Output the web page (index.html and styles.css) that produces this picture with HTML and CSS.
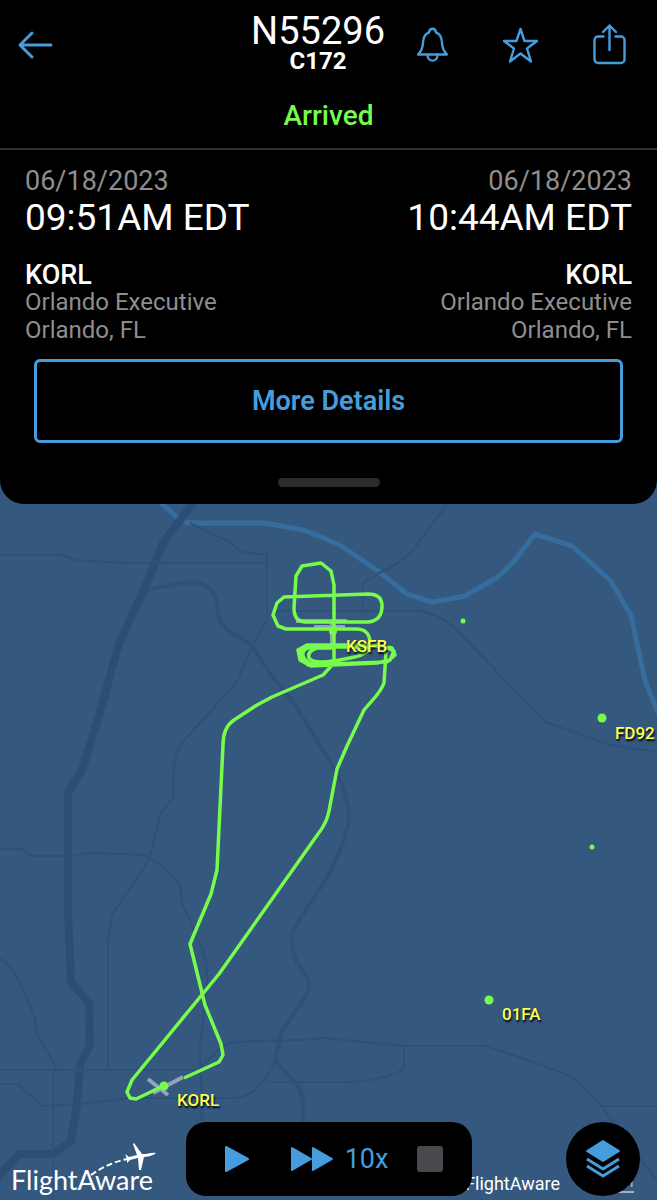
FILE: index.html
```html
<!DOCTYPE html>
<html lang="en">
<head>
    <meta charset="UTF-8">
    <meta name="viewport" content="width=device-width, initial-scale=1.0">
    <title>N55296 Flight Track</title>
    <link rel="stylesheet" href="styles.css">
</head>
<body>
    <div class="panel">
        <header class="header">
            <button class="icon-button" aria-label="Back">
                <svg class="icon" viewBox="0 0 36 42"><path d="M15 9 3 21l12 12M3 21h31" stroke-width="3"/></svg>
            </button>
            <div class="title">
                <h1>N55296</h1>
                <div class="aircraft">C172</div>
            </div>
            <div class="actions">
                <button class="icon-button" aria-label="Alerts">
                    <svg class="icon" viewBox="0 0 36 42"><path d="M3 30.500C6.500 27 7.800 24.500 8 19C8.300 12.500 10.500 9.500 14 8.500C14.500 3.500 20.500 3.500 21 8.500C24.500 9.500 26.700 12.500 27 19C27.200 24.500 28.500 27 32 30.500ZM12.500 31C12.500 38.500 22.500 38.500 22.500 31"/></svg>
                </button>
                <button class="icon-button" aria-label="Favorite">
                    <svg class="icon" viewBox="0 0 36 42"><path d="M17.500 5 21.500 17H34L24 24.500 28 37.500 17.500 29.500 7 37.500 11 24.500 1 17H13.500Z"/></svg>
                </button>
                <button class="icon-button" aria-label="Share">
                    <svg class="icon" viewBox="0 0 36 42"><path d="M12.500 12.500H7a3.500 3.500 0 0 0-3.500 3.500V35.500a3.500 3.500 0 0 0 3.500 3.500h23a3.500 3.500 0 0 0 3.500-3.500V16a3.500 3.500 0 0 0-3.500-3.500H24.500M18.500 26V1.500M12 8l6.500-6.500 6.500 6.500"/></svg>
                </button>
            </div>
        </header>

        <div class="status">Arrived</div>

        <div class="flight">
            <div class="endpoint">
                <div class="date">06/18/2023</div>
                <div class="time">09:51AM EDT</div>
                <h2>KORL</h2>
                <div class="place">Orlando Executive<br>Orlando, FL</div>
            </div>
            <div class="endpoint arrival">
                <div class="date">06/18/2023</div>
                <div class="time">10:44AM EDT</div>
                <h2>KORL</h2>
                <div class="place">Orlando Executive<br>Orlando, FL</div>
            </div>
        </div>

        <button class="details">More Details</button>
        <div class="handle"></div>
    </div>

    <main class="map">
        <svg class="map-canvas" viewBox="0 480 657 720" preserveAspectRatio="xMidYMin slice">
            <!-- river -->
            <path class="river" d="M160 502 180 520 190 523H265L304 530 340 545 378 571 407 594 432 602 465 596 498 577 515 560 535 534 572 546 610 580 631 615 645 681 660 717"/>

            <!-- roads -->
            <path class="road highway" d="M194 502 164 541 144 590 119 643 99 716 82 770 68 792V910L71 982 89 1003 90 1045 80 1064 77 1105 71 1141 53 1154H20L-3 1178"/>
            <path class="road major" d="M147 590C170 586 185 581 199 583C218 588 216 605 219 618C224 632 242 637 252 646L269 672 295 705 326 755C341 776 349 800 349 820C342 850 336 859 328 876L294 928C290 940 293 958 300 967C316 986 308 993 298 1008L281 1033 275 1061 298 1086C304 1094 303 1107 303 1125"/>
            <path class="road" d="M0 555H62L75 560 125 563H267M190 523 212 534 227 540 242 552 267 555V620L252 646 237 682 180 745 174 764 173 798 160 814 152 850 147 863 112 915 108 940V1070"/>
            <path class="road" d="M447 505 430 527 412 552 395 565 377 574 363 583V610M270 611H422C438 616 446 620 457 630L500 675 546 722 610 745 657 752"/>
            <path class="road" d="M-2 849H22L32 856H72L90 853 145 855 165 868 180 884 182 903 197 938C207 958 209 968 206 995L200 1045 202 1125"/>
            <path class="road" d="M-2 958C15 965 18 980 35 1017L37 1035 54 1063 56 1073M0 1070H197C210 1060 215 1052 225 1045C238 1039 270 1043 325 1038L404 1046H485L516 1056 568 1075C590 1090 604 1107 615 1126L657 1180M602 1106H657M404 1046V1065C404 1075 370 1082 344 1082H267M53 1073V1200M-2 1084H18L42 1106 79 1104 130 1098H235C260 1095 267 1075 275 1061"/>

            <!-- runways -->
            <path class="runway" d="M148 1079 168 1095M153 1093 183 1077M296 621H347M314 627H345M332 620V648"/>

            <!-- flight track -->
            <path class="track" d="M184 1078 219 1062 223 1055 221 1044 205 1005 190 944 211 894 217 870 223 745C223 732 228 724 234 720L257 705 272 697 323 675 334 663V585L331 571 321 563 302 566 296 576 294 608C294 618 299 622 306 622H368C379 621 382 614 382 606C382 597 376 594 368 594L284 597 277 603 273 615 278 626 286 629H356C367 629 370 635 370 644C370 655 358 657 334 661L308 665 301 656 302 649 311 646H382L394 651 390 660 377 663 311 666 300 660 298 650 307 645H377L392 648 395 655 387 662 330 664"/>
            <path class="track" d="M386 652 384 683C380 694 373 699 364 710L347 746 337 769 329 811C327 821 322 829 318 834L219 974 132 1080 127 1092 130 1098 136 1099 163 1086"/>
            <path class="track" d="M371 647H314Q301 648 303 656Q305 664 317 664H350"/>
            <path class="track" d="M334 648H317Q307 651 309 658Q313 664 334 661"/>

            <!-- airports -->
            <g class="airport">
                <circle cx="333" cy="631" r="4"/>
                <circle cx="164" cy="1086" r="4.500"/>
                <circle cx="602" cy="718" r="4.500"/>
                <circle cx="489" cy="1000" r="4.500"/>
                <circle cx="463" cy="621" r="2.500"/>
                <circle cx="592" cy="847" r="2.500"/>
            </g>
            <g class="airport-label">
                <text x="346" y="652">KSFB</text>
                <text x="615" y="739">FD92</text>
                <text x="502" y="1020">01FA</text>
                <text x="177" y="1106">KORL</text>
            </g>

            <!-- logo -->
            <text class="logo" x="11" y="1190">FlightAware</text>
            <path class="logo-trail" d="M91 1175Q108 1163 127 1159"/>
            <path class="logo-plane" d="M156 1153Q154 1152 146 1154L142 1154 134 1143 133 1144 137 1155 129 1157 125 1154 127 1159 127 1163 130 1160 138 1158 139 1170 141 1170 144 1157Q153 1156 156 1153Z"/>
        </svg>

        <a class="attribution" href="#">FlightAware</a>
        <a class="legal" href="#">mi</a>

        <div class="player">
            <button class="play" aria-label="Play">
                <svg width="26" height="28" viewBox="0 0 26 28"><path d="M2 2 24 14 2 26Z"/></svg>
            </button>
            <button class="speed">
                <svg width="44" height="28" viewBox="0 0 44 28"><path d="M2 3 21 14 2 25ZM23 3 42 14 23 25Z"/></svg>
                10x
            </button>
            <button class="stop" aria-label="Stop"></button>
        </div>
        <button class="layers" aria-label="Map layers">
            <svg width="36" height="40" viewBox="0 0 36 40"><path d="M18 2 34 12 18 22 2 12Z"/><path class="layer-line" d="M2 20 18 30 34 20M2 27 18 37 34 27"/></svg>
        </button>
    </main>
</body>
</html>
```
FILE: styles.css
```css
* {
    box-sizing: border-box;
}

body {
    display: flex;
    flex-direction: column;
    min-height: 100vh;
    margin: 0;
    font-family: Roboto, sans-serif;
    background-color: #34587e;
    color: #fff;
}

h1, h2 {
    margin: 0;
}

button {
    padding: 0;
    border: none;
    background: none;
    font-family: inherit;
    color: #459ddd;
    cursor: pointer;
}

svg {
    display: block;
}

.panel {
    position: relative;
    z-index: 1;
    padding-bottom: 17px;
    background-color: #000;
    border-radius: 0 0 24px 24px;
}

.header {
    display: flex;
    align-items: center;
    height: 90px;
    padding: 0 30px 0 17px;
}

.icon {
    width: 36px;
    height: 42px;
    fill: none;
    stroke: #459ddd;
    stroke-width: 2.4;
    stroke-linecap: round;
    stroke-linejoin: round;
}

.title {
    margin: 0 30px 4px auto;
    text-align: center;
}

.title h1 {
    font-size: 38px;
    font-weight: 400;
    line-height: 36px;
}

.aircraft {
    font-size: 24px;
    font-weight: 700;
    line-height: 24px;
}

.actions {
    display: flex;
    gap: 52px;
}

.status {
    height: 60px;
    border-bottom: 2px solid #303030;
    font-size: 28px;
    font-weight: 500;
    line-height: 52px;
    text-align: center;
    color: #77fb4c;
}

.flight {
    display: flex;
    justify-content: space-between;
    padding: 14px 25px 15px;
}

.arrival {
    text-align: right;
}

.date {
    font-size: 27px;
    line-height: 34px;
    color: #8e8e8e;
}

.time {
    font-size: 37px;
    line-height: 40px;
}

.flight h2 {
    margin-top: 24px;
    font-size: 27px;
    font-weight: 500;
    line-height: 26px;
}

.place {
    font-size: 24px;
    line-height: 28px;
    color: #8e8e8e;
}

.details {
    display: block;
    width: calc(100% - 68px);
    height: 84px;
    margin: 0 auto 35px;
    border: 3px solid #459ddd;
    border-radius: 6px;
    font-size: 27px;
    font-weight: 600;
}

.handle {
    width: 102px;
    height: 9px;
    margin: 0 auto;
    border-radius: 5px;
    background-color: #2c2b30;
}

.map {
    position: relative;
    flex: 1;
    min-height: 720px;
    margin-top: -24px;
    overflow: hidden;
}

.map-canvas {
    position: absolute;
    width: 100%;
    height: 100%;
}

.river, .road, .runway, .track {
    fill: none;
    stroke-linejoin: round;
}

.river {
    stroke: #366c9e;
    stroke-width: 5;
}

.road {
    stroke: #2d5179;
    stroke-width: 2;
}

.major {
    stroke-width: 4;
}

.highway {
    stroke: #2a4e76;
    stroke-width: 8;
}

.runway {
    stroke: #94a3bd;
    stroke-width: 4;
}

.track {
    stroke: #77fb4c;
    stroke-width: 3.5;
}

.airport {
    fill: #77fb4c;
}

.airport-label {
    font-size: 17px;
    font-weight: 500;
    fill: #feff54;
    text-shadow: 1px 2px 2px #000;
}

.logo {
    font-family: Lato, sans-serif;
    font-size: 27px;
    fill: #fff;
}

.logo-trail {
    fill: none;
    stroke: #fff;
    stroke-width: 2;
    stroke-dasharray: 6 3;
}

.logo-plane {
    fill: #fff;
}

.attribution, .legal {
    position: absolute;
    color: #fff;
    font-size: 18px;
    line-height: 20px;
    text-decoration: none;
}

.attribution {
    right: 97px;
    bottom: 6px;
}

.legal {
    right: 23px;
    bottom: 7px;
    border-bottom: 2px solid #a3afc5;
    color: #a3afc5;
}

.player {
    position: absolute;
    bottom: 4px;
    left: 50%;
    display: flex;
    align-items: center;
    justify-content: space-between;
    width: 286px;
    height: 74px;
    padding: 0 29px 0 38px;
    border-radius: 20px;
    background-color: #000;
    transform: translateX(-50%);
}

.player svg, .layers svg {
    fill: #459ddd;
    stroke: #459ddd;
    stroke-width: 2;
    stroke-linejoin: round;
}

.speed {
    display: flex;
    align-items: center;
    gap: 11px;
    margin-left: 12px;
    font-size: 27px;
}

.stop {
    width: 26px;
    height: 26px;
    border-radius: 3px;
    background-color: #49484d;
}

.layers {
    position: absolute;
    right: 17px;
    bottom: 4px;
    display: flex;
    align-items: center;
    justify-content: center;
    width: 74px;
    height: 74px;
    border-radius: 50%;
    background-color: #000;
}

.layers .layer-line {
    fill: none;
    stroke-width: 3;
}
```
